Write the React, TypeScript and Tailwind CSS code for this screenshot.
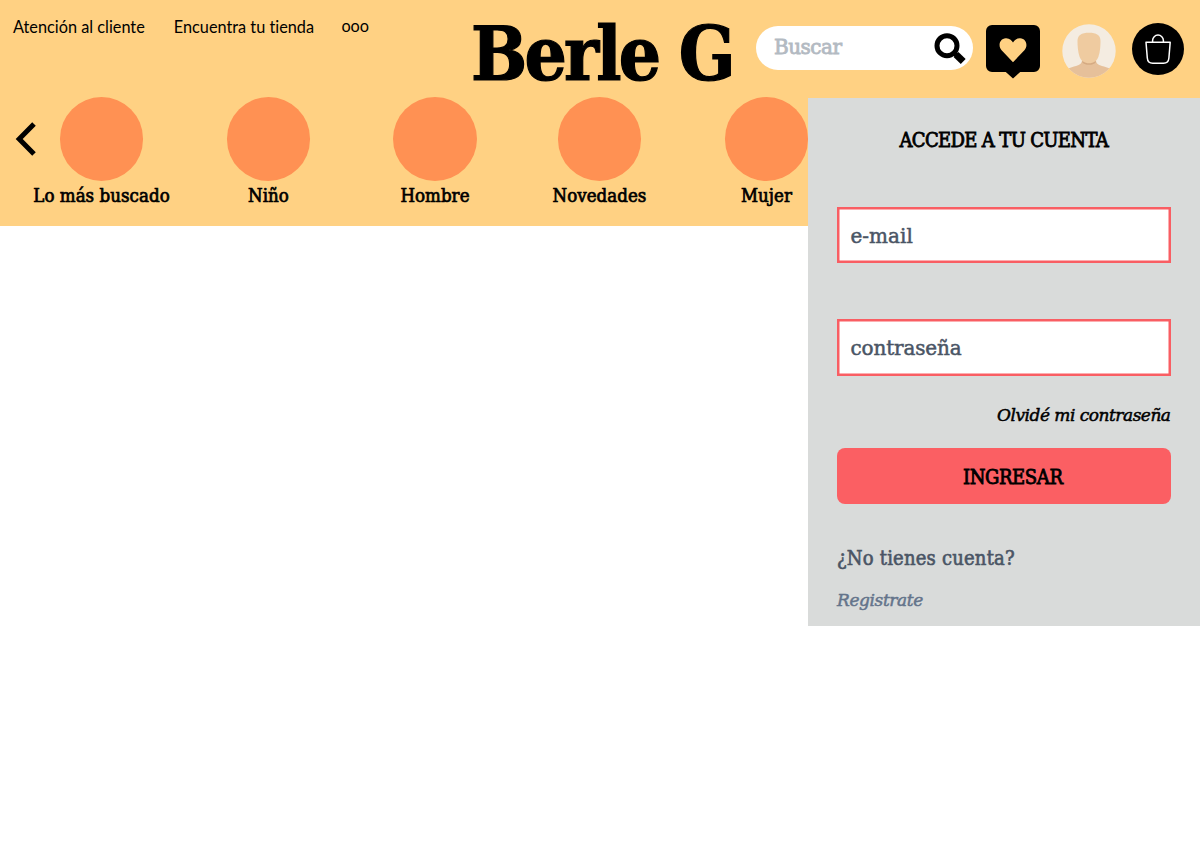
import React from "react";

const categories = [
  { name: "Lo más buscado", slot: "w-[167px]" },
  { name: "Niño", slot: "w-[167px]" },
  { name: "Hombre", slot: "w-[166px]" },
  { name: "Novedades", slot: "w-[163px]" },
  { name: "Mujer", slot: "w-[171px]" },
];

function SearchIcon() {
  return (
    <svg className="mt-[2px] h-[32px] w-[32px]" viewBox="0 0 32 32" fill="none" stroke="#000">
      <circle cx="13" cy="12.700" r="10" strokeWidth="5" />
      <path d="M20 19.700 23 22.700" strokeWidth="4.600" />
      <path d="M22 21.500 29.200 28.500" strokeWidth="7" />
    </svg>
  );
}

function HeartIcon() {
  return (
    <svg className="h-[54px] w-[54px]" viewBox="0 0 54 54">
      <path
        fillRule="evenodd"
        d="M6 0H48a6 6 0 0 1 6 6V41a6 6 0 0 1-6 6H34.2L27 53.5 19.8 47H6a6 6 0 0 1-6-6V6a6 6 0 0 1 6-6ZM27 37.2 15.6 25.2C11.8 21 13.4 13.6 19.8 13.2 23.6 13 26 15.6 27 17.6 28 15.6 30.4 13 34.2 13.2 40.6 13.6 42.2 21 38.4 25.2Z"
      />
    </svg>
  );
}

function Avatar() {
  return (
    <svg className="h-[54px] w-[54px]" viewBox="0 0 54 54">
      <defs>
        <clipPath id="avatar">
          <circle cx="27" cy="27" r="26.7" />
        </clipPath>
      </defs>
      <g clipPath="url(#avatar)">
        <path fill="#f4ece1" d="M0 0H54V54H0Z" />
        <path fill="#e6c09a" d="M0 47C4 44.500 11 43 16 41.200 19.500 40 20.300 38 20.300 33H33.700C33.700 38 34.500 40 38 41.200 43 43 50 44.500 54 47V54H0Z" />
        <path fill="#d5aa82" d="M20.300 35H33.700V38.500C31 41.600 23 41.600 20.300 38.500Z" />
        <path fill="#efcba0" d="M15.500 17C15.500 11 19.500 8.700 27 8.700S38.500 11 38.500 17C38.500 23 38 28 36.500 32.500 35 37 31.500 39.300 27 39.300S19 37 17.500 32.500C16 28 15.500 23 15.500 17Z" />
      </g>
    </svg>
  );
}

function BagIcon() {
  return (
    <svg className="h-[52px] w-[52px]" viewBox="0 0 52 52" fill="none">
      <circle cx="26" cy="26" r="26" fill="#000" />
      <g stroke="#fff" strokeWidth="1.500" strokeLinejoin="round">
        <path d="M14 19.300H38.200L36.900 35Q36.500 40.200 31.500 40.200H20.700Q15.700 40.200 15.300 35Z" />
        <path d="M20.600 19V17.500A5.400 5.400 0 0 1 31.400 17.500V19" />
      </g>
    </svg>
  );
}

const field =
  "flex h-[56.5px] items-center bg-white pt-[2px] pl-[13.5px] text-[20px] text-[#4a5565] shadow-[inset_0_0_0_2.5px_#f95e63] [font-stretch:normal] [-webkit-text-stroke:0.5px]";

export default function App() {
  return (
    <div className="relative h-[859px] w-[1200px] overflow-hidden bg-white font-['DejaVu_Serif',serif] [font-stretch:condensed] text-black">
      <header className="h-[226px] bg-[#ffd183]">
        <div className="flex h-[97px] items-start">
          <nav className="flex w-[471px] gap-[29px] pt-[15px] pl-[13px] font-[Lato,sans-serif] text-[16.300px] leading-6 whitespace-nowrap [font-variant-ligatures:none]">
            <a>Atención al cliente</a>
            <a>Encuentra tu tienda</a>
            <a className="-mt-px -ml-[1.500px] tracking-[-0.200px]">ooo</a>
          </nav>
          <h1 className="w-[285px] pt-[2px] text-[74px] leading-[104px] font-bold tracking-[-2.800px] whitespace-nowrap [-webkit-text-stroke:1.200px]">Berle G</h1>
          <div className="mt-[26px] flex h-[44px] w-[217px] items-center justify-between rounded-full bg-white pr-[7px] pl-[18px]">
            <span className="pb-[3px] text-[20px] tracking-[-0.500px] text-[#b3bac2] [font-stretch:normal] [-webkit-text-stroke:0.800px]">Buscar</span>
            <SearchIcon />
          </div>
          <div className="ml-[13px] pt-[25px]"><HeartIcon /></div>
          <div className="ml-[22px] pt-[24px]"><Avatar /></div>
          <div className="ml-[16px] pt-[23px]"><BagIcon /></div>
        </div>
        <div className="flex">
          <div className="w-[18px] pt-[25px] pl-[14px]">
            <svg className="h-[34px] w-[24px] max-w-none" viewBox="0 0 24 34" fill="none" stroke="#000" strokeWidth="5">
              <path d="M20 2 5.200 17 20 32" />
            </svg>
          </div>
          {categories.map((c) => (
            <div key={c.name} className={`flex shrink-0 flex-col items-center ${c.slot}`}>
              <div className="h-[83.500px] w-[83.500px] rounded-full bg-[#ff9153]" />
              <span className="mt-[2px] text-[18.500px] leading-[26px] tracking-[0.050px] whitespace-nowrap [-webkit-text-stroke:0.700px]">{c.name}</span>
            </div>
          ))}
        </div>
      </header>

      <aside className="absolute top-[97.500px] right-0 flex h-[528.500px] w-[392.500px] flex-col bg-[#d9dbda] pr-[29.500px] pl-[29.500px]">
        <h2 className="mt-[27.500px] text-center text-[20px] leading-[30px] tracking-[-0.650px] whitespace-nowrap [-webkit-text-stroke:0.800px]">ACCEDE A TU CUENTA</h2>
        <div className={`${field} mt-[51.500px]`}>e-mail</div>
        <div className={`${field} mt-[56px] tracking-[-0.150px]`}>contraseña</div>
        <a className="mt-[26px] text-right text-[17px] leading-[26px] tracking-[-0.500px] italic [font-stretch:normal] [-webkit-text-stroke:0.500px]">Olvidé mi contraseña</a>
        <button className="mt-[20px] h-[56.500px] rounded-[8px] bg-[#fb5f63] pt-[3px] pl-[18px] text-[20px] tracking-[-0.400px] [-webkit-text-stroke:0.800px]">INGRESAR</button>
        <p className="mt-[38.500px] text-[20px] leading-[30px] tracking-[0.200px] text-[#4a5565] [-webkit-text-stroke:0.600px]">¿No tienes cuenta?</p>
        <a className="mt-[14px] text-[17px] leading-[26px] tracking-[-0.400px] text-[#64748b] italic [font-stretch:normal] [-webkit-text-stroke:0.500px]">Registrate</a>
      </aside>
    </div>
  );
}
